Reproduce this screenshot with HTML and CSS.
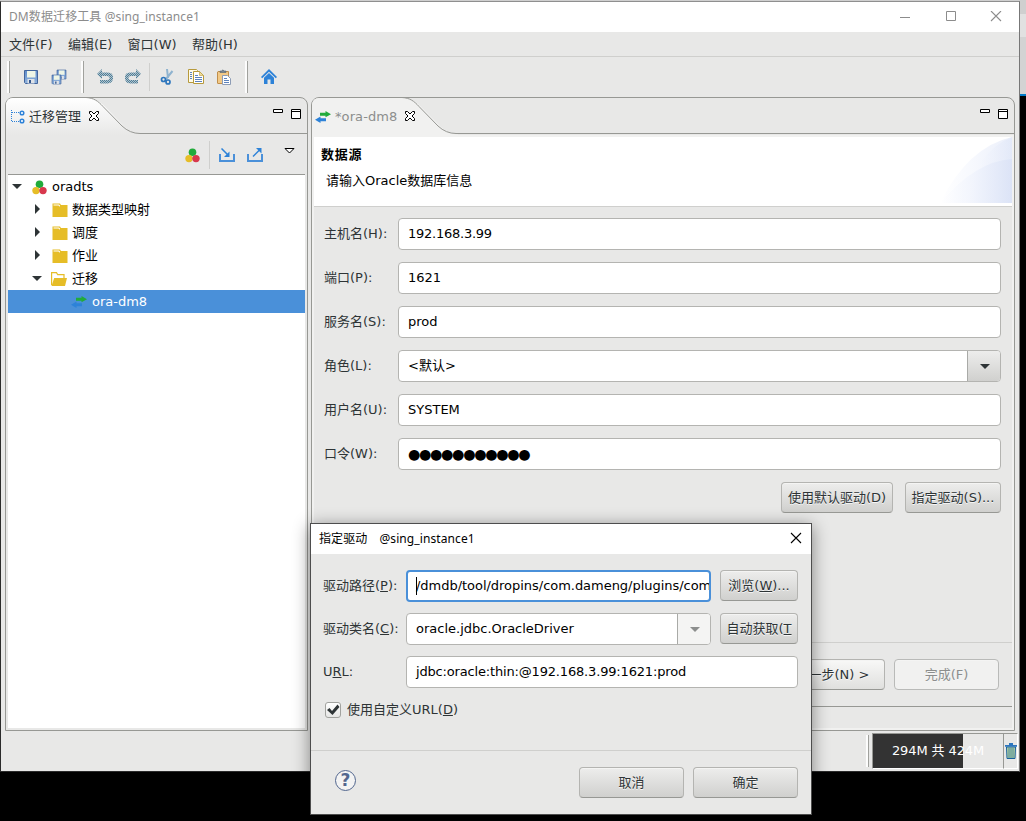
FILE: index.html
```
<!DOCTYPE html>
<html lang="zh-CN">
<head>
<meta charset="UTF-8" />
<meta name="viewport" content="width=device-width, initial-scale=1" />
<title>DM数据迁移工具 @sing_instance1</title>
<link rel="stylesheet" href="styles.css">
</head>
<body>

  <!-- shared icons -->
  <svg class="defs" width="0" height="0" aria-hidden="true">
    <defs>
      <linearGradient id="tabFill" x1="0" y1="0" x2="0" y2="1">
        <stop offset="0" stop-color="#ffffff"/>
        <stop offset="1" stop-color="#e8e8e7"/>
      </linearGradient>
      <linearGradient id="saveFill" x1="0" y1="0" x2="0" y2="1">
        <stop offset="0" stop-color="#5f8ccb"/>
        <stop offset="1" stop-color="#8fb2dc"/>
      </linearGradient>
      <linearGradient id="swoosh" x1="0" y1="0" x2="1" y2="0">
        <stop offset="0" stop-color="#ffffff"/>
        <stop offset="0.4" stop-color="#f2f5fd"/>
        <stop offset="1" stop-color="#dae2f6"/>
      </linearGradient>
      <pattern id="dither" width="2" height="2" patternUnits="userSpaceOnUse">
        <path d="M0 0h2v2H0z" fill="#b4c3ca"/>
        <path d="M0 0h1v1H0zM1 1h1v1H1z" fill="#4d7f9b"/>
      </pattern>
    </defs>
    <symbol id="i-save" viewBox="0 0 16 16">
      <path d="M1.500 1.500h13v13h-12l-1-1z" fill="url(#saveFill)" stroke="#42659c"/>
      <path d="M4 2h8.500v6.500H4z" fill="#eef5e6"/>
      <path d="M4.500 10h7v4.500h-7z" fill="#dfe3e8"/>
      <path d="M6 11h2v3H6z" fill="#36598f"/>
    </symbol>
    <symbol id="i-undo" viewBox="0 0 16 16">
      <path d="M0 5 5 0v3.500h5.500c5 0 5.500 3 5.500 5.500s-1.500 5.500-5.500 5.500H3v-3.500h7c2 0 2.500-1 2.500-2S12 7 10 7H5v3z" fill="url(#dither)"/>
    </symbol>
    <symbol id="i-dots" viewBox="0 0 15 15">
      <circle cx="7.500" cy="4.200" r="3.800" fill="#21ab3b"/>
      <circle cx="4" cy="10.600" r="3.700" fill="#e6bd27"/>
      <circle cx="11" cy="10.600" r="3.700" fill="#d8384d"/>
    </symbol>
    <symbol id="i-folder" viewBox="0 0 16 14">
      <path d="M.5 12.500V.5H8L9 2h6.500v12H.5z" fill="#e6bd27"/>
      <path d="M1.500 2.500V1.500H7L8 2.500v1H7.500l-1-1z" fill="#fff"/>
    </symbol>
    <symbol id="i-swap" viewBox="0 0 16 12">
      <path d="M5 1.800h5.500V0L16 3.300l-5.500 3V4.800H5z" fill="#21ab3b"/>
      <path d="M11 7.200H5.500V5.400L0 8.700 5.500 12v-1.800H11z" fill="#2d82d8"/>
    </symbol>
    <symbol id="i-close" viewBox="0 0 12 12">
      <path d="M1.500 1.500h2l2.500 2.500 2.500-2.500h2v2L8 6l2.500 2.500v2h-2L6 8l-2.500 2.500h-2v-2L4 6 1.500 3.500z" fill="#fff" stroke="#000"/>
    </symbol>
    <symbol id="i-min" viewBox="0 0 10 11"><path d="M.5 .5h9v3h-9z" fill="#fff" stroke="#000"/></symbol>
    <symbol id="i-max" viewBox="0 0 10 11"><path d="M.5 .5h9v9h-9zM.5 2.500h9" fill="#fff" stroke="#000"/></symbol>
    <symbol id="i-x" viewBox="0 0 12 12"><path d="M1 1l10 10M11 1L1 11" fill="none" stroke="currentColor" stroke-width="1.100"/></symbol>
  </svg>

  <div class="desktop-strip"></div>

  <div class="window">
    <div class="titlebar">
      <span class="title-text">DM数据迁移工具 @sing_instance1</span>
      <div class="win-buttons">
        <svg width="12" height="12"><path d="M1 6.500h10" stroke="#8c8c8c"/></svg>
        <svg width="12" height="12"><path d="M1.500 .5h9v9h-9z" fill="none" stroke="#8c8c8c"/></svg>
        <svg width="12" height="12"><use href="#i-x" y="-1" width="12" height="12"/></svg>
      </div>
    </div>

    <div class="menubar">
      <span>文件(F)</span><span>编辑(E)</span><span>窗口(W)</span><span>帮助(H)</span>
    </div>

    <div class="toolbar">
      <i class="grip"></i>
      <div class="tools tools-file">
        <svg width="16" height="16"><use href="#i-save"/></svg>
        <svg width="16" height="16"><use href="#i-save" x="5" y="0" width="11" height="11"/><use href="#i-save" x="0" y="5" width="11" height="11"/></svg>
      </div>
      <i class="grip"></i>
      <div class="tools tools-edit">
        <svg width="16" height="16"><use href="#i-undo"/></svg>
        <svg width="16" height="16" class="flip"><use href="#i-undo"/></svg>
      </div>
      <i class="sep"></i>
      <div class="tools tools-clip">
        <svg width="16" height="16">
          <path d="M7 0 8 9M12.500 2 6 10" stroke="#8fb3cf" stroke-width="2"/>
          <circle cx="3.500" cy="10.500" r="2" fill="none" stroke="#2d76bd" stroke-width="1.700"/>
          <circle cx="8" cy="13" r="2" fill="none" stroke="#2d76bd" stroke-width="1.700"/>
        </svg>
        <svg width="16" height="16">
          <path d="M.5 .5h8l1 1v12h-9z" fill="#fffbe8" stroke="#b79a3c"/>
          <path d="M5.500 2.500h6l4 4v8h-10z" fill="#fff" stroke="#b79a3c"/>
          <path d="M11.500 2.500v4h4z" fill="#f0dc9a" stroke="#b79a3c" stroke-width=".6"/>
          <path d="M7 6.500h3M7 8.500h7M7 10.500h7M7 12.500h7M2 3.500h2M2 5.500h2M2 7.500h2M2 9.500h2" stroke="#5d83bd"/>
        </svg>
        <svg width="16" height="16">
          <path d="M2 2.500h10.500v12H2q-.5 0-.5-.5V3z" fill="#f2c987" stroke="#c08f4c"/>
          <path d="M4 3.500V2h1.500q1-2 3 0H10v1.500z" fill="#7a8794" stroke="#55636f" stroke-width=".6"/>
          <path d="M6.500 6.500h5l3 3v6h-8z" fill="#fff" stroke="#8d9cb5"/>
          <path d="M8 9.500h3M8 11.500h5M8 13.500h5" stroke="#5d83bd"/>
        </svg>
      </div>
      <i class="grip"></i>
      <div class="tools tools-home">
        <svg width="16" height="16"><path d="M8 0 0 8l1.200 1.200L8 2.800l6.800 6.400L16 8z" fill="#2d82d8"/><path d="M8 4 3 8.800V15h3.500v-4.500h3V15H13V8.800z" fill="#2d82d8"/></svg>
      </div>
    </div>

    <div class="workbench">
      <section class="panel panel-nav">
        <div class="tabs">
          <svg class="tab-shape" width="302" height="37">
            <path d="M0 37V6Q1 0 7 0H80C88 0 93 2.500 99 8.500L118 28Q126 36.500 136 36.500V37z" fill="url(#tabFill)"/>
            <path d="M80 -.5C88 0 92 3 97 8.500L116 28Q124 35.500 134 35.500H302" fill="none" stroke="#979894"/>
          </svg>
          <svg width="14" height="14">
            <path d="M.5 0V12M1 2.500h7M1 11.500h7" fill="none" stroke="#2d82d8" stroke-dasharray="1 1"/>
            <circle cx="11" cy="3" r="1.800" fill="#fff" stroke="#2d82d8" stroke-width="1.500"/>
            <circle cx="11" cy="11" r="1.800" fill="#fff" stroke="#2d82d8" stroke-width="1.500"/>
          </svg>
          <span class="tab-name">迁移管理</span>
          <svg class="close" width="12" height="12"><use href="#i-close"/></svg>
          <div class="view-buttons">
            <svg width="10" height="11"><use href="#i-min"/></svg>
            <svg width="10" height="11"><use href="#i-max"/></svg>
          </div>
        </div>
        <div class="view-tools">
          <svg width="15" height="15"><use href="#i-dots"/></svg>
          <i class="sep"></i>
          <svg width="16" height="14"><path d="M1 6v7h14V6" fill="none" stroke="#4a90d9" stroke-width="2"/><path d="M2.500 .5 9 7" stroke="#2d82d8" stroke-width="1.500"/><path d="M10.500 3.500v5.500H5z" fill="#2d82d8"/></svg>
          <svg width="16" height="14"><path d="M1 6v7h14V6" fill="none" stroke="#4a90d9" stroke-width="2"/><path d="M6 8.500 12.500 2" stroke="#2d82d8" stroke-width="1.500"/><path d="M9 0h5.500v5.500z" fill="#2d82d8"/></svg>
          <svg class="view-menu" width="11" height="6"><path d="M1 .5h9L5.500 5z" fill="#fff" stroke="#000"/></svg>
        </div>
        <ul class="tree">
          <li class="lv0"><i class="arrow down"></i><svg width="15" height="15"><use href="#i-dots"/></svg>oradts</li>
          <li class="lv1"><i class="arrow right"></i><svg width="16" height="14"><use href="#i-folder"/></svg>数据类型映射</li>
          <li class="lv1"><i class="arrow right"></i><svg width="16" height="14"><use href="#i-folder"/></svg>调度</li>
          <li class="lv1"><i class="arrow right"></i><svg width="16" height="14"><use href="#i-folder"/></svg>作业</li>
          <li class="lv1"><i class="arrow down"></i><svg width="16" height="14"><path d="M.6 13V.7H5.500l1.200 2H13v4" fill="none" stroke="#e6bd27" stroke-width="1.200"/><path d="M3.200 6H16l-2 8H.5z" fill="#e6bd27"/></svg>迁移</li>
          <li class="lv2 selected"><svg width="16" height="12"><use href="#i-swap"/></svg>ora-dm8</li>
        </ul>
      </section>

      <section class="panel panel-editor">
        <div class="tabs">
          <svg class="tab-shape" width="703" height="37">
            <path d="M0 37V6Q1 0 7 0H90C98 0 103 2.500 109 8.500L128 28Q136 36.500 146 36.500V37z" fill="#f1f1f0"/>
            <path d="M90 -.5C98 0 102 3 107 8.500L126 28Q134 35.500 144 35.500H703" fill="none" stroke="#979894"/>
          </svg>
          <svg width="16" height="12"><use href="#i-swap"/></svg>
          <span class="tab-name dim">*ora-dm8</span>
          <svg class="close" width="12" height="12"><use href="#i-close"/></svg>
          <div class="view-buttons">
            <svg width="10" height="11"><use href="#i-min"/></svg>
            <svg width="10" height="11"><use href="#i-max"/></svg>
          </div>
        </div>

        <div class="page">
          <header class="banner">
            <div>
              <h1>数据源</h1>
              <p>请输入Oracle数据库信息</p>
            </div>
            <svg width="72" height="66">
              <path d="M0 66Q28 10 72 0V66z" fill="url(#swoosh)" opacity=".55"/>
              <path d="M24 66Q36 14 72 0V66z" fill="url(#swoosh)" opacity=".45"/>
              <path d="M0 66Q36 24 72 22V66z" fill="url(#swoosh)" opacity=".8"/>
            </svg>
          </header>

          <div class="form">
            <div class="row"><label>主机名(H):</label><div class="input tight">192.168.3.99</div></div>
            <div class="row"><label>端口(P):</label><div class="input">1621</div></div>
            <div class="row"><label>服务名(S):</label><div class="input">prod</div></div>
            <div class="row"><label>角色(L):</label><div class="input combo"><span>&lt;默认&gt;</span><b class="drop"><i class="arrow down"></i></b></div></div>
            <div class="row"><label>用户名(U):</label><div class="input">SYSTEM</div></div>
            <div class="row"><label>口令(W):</label><div class="input password">●●●●●●●●●●●</div></div>
            <div class="form-actions">
              <button class="btn btn-default">使用默认驱动(D)</button>
              <button class="btn btn-driver">指定驱动(S)...</button>
            </div>
          </div>

          <div class="wizard-actions">
            <button class="btn next">下一步(N) &gt;</button>
            <button class="btn" disabled>完成(F)</button>
          </div>
          <div class="page-foot"></div>
        </div>
      </section>
    </div>

    <div class="statusbar">
      <i class="grip"></i>
      <div class="heap"><span>294M 共 424M</span></div>
      <div class="trash">
        <svg width="12" height="16">
          <path d="M1.500 4h9l-.5 11.500H2z" fill="#b5cfa0" stroke="#17609e"/>
          <path d="M4 5v10M6 5v10M8 5v10" stroke="#2b7a9e" stroke-width=".8"/>
          <path d="M0 2.800h12M4 1h4" stroke="#2d76bd" stroke-width="1.800"/>
        </svg>
      </div>
    </div>
  </div>

  <div class="dialog" role="dialog">
    <div class="dialog-title">
      <span class="title-text">指定驱动</span>
      <span class="title-text">@sing_instance1</span>
      <svg width="12" height="12"><use href="#i-x"/></svg>
    </div>
    <div class="dialog-body">
      <div class="row">
        <label>驱动路径(<u>P</u>):</label>
        <div class="input focused"><span class="caret"></span>/dmdb/tool/dropins/com.dameng/plugins/com</div>
        <button class="btn">浏览(<u>W</u>)...</button>
      </div>
      <div class="row">
        <label>驱动类名(<u>C</u>):</label>
        <div class="input combo"><span>oracle.jdbc.OracleDriver</span><b class="drop off"><i class="arrow down"></i></b></div>
        <button class="btn auto">自动获取(<u>T</u></button>
      </div>
      <div class="row">
        <label>U<u>R</u>L:</label>
        <div class="input url">jdbc:oracle:thin:@192.168.3.99:1621:prod</div>
      </div>
      <div class="check-row">
        <span class="checkbox"><svg width="14" height="12"><path d="M1 6l2.500-2L6 7 11.500 .5 13.500 3 6.500 11z" fill="#2e3436"/></svg></span>
        <span>使用自定义URL(<u>D</u>)</span>
      </div>
    </div>
    <div class="dialog-foot">
      <div class="help">?</div>
      <button class="btn">取消</button>
      <button class="btn">确定</button>
    </div>
  </div>

</body>
</html>
```
FILE: styles.css
```
* {
  box-sizing: border-box;
}
body {
  margin: 0;
  width: 1026px;
  height: 821px;
  overflow: hidden;
  position: relative;
  background: #000;
  padding-top: 1px;
  font-family: "DejaVu Sans", "Noto Sans CJK SC", sans-serif;
  font-size: 13px;
  line-height: 20px;
  color: #2e3436;
}
svg {
  display: block;
  flex: none;
}
.defs {
  position: absolute;
}
/* bit of the desktop that shows behind the window */
.desktop-strip {
  position: absolute;
  top: 0;
  left: 0;
  width: 1026px;
  height: 96px;
  background: linear-gradient(#cfcfcf 0 14px, #e1e1e1 14px 37px, #d3d3d3 37px);
  border-bottom: 2px solid #0078c8;
}
.window {
  position: relative;
  width: 1020px;
  height: 771px;
  display: flex;
  flex-direction: column;
  background: #e8e8e7;
  border: 1px solid #2b2b2b;
  border-top-color: #8f8f8f;
  border-right-color: #777;
}
.titlebar {
  height: 30px;
  flex: none;
  background: #fff;
  display: flex;
  align-items: center;
  justify-content: space-between;
  padding: 0 17px 0 8px;
  color: #8c8c8c;
}
.title-text {
  font-family: "Noto Sans", "Noto Sans CJK SC", sans-serif;
  font-size: 12px;
  letter-spacing: 0.1px;
}
.win-buttons {
  display: flex;
  gap: 33.5px;
}
.menubar {
  height: 25px;
  flex: none;
  display: flex;
  gap: 15.300px;
  padding: 3px 8px 0;
  border-bottom: 1px solid #cfcfcd;
}
.toolbar {
  height: 40px;
  flex: none;
  display: flex;
  align-items: center;
  padding-left: 6px;
}
.grip {
  width: 3px;
  height: 32px;
  flex: none;
  border-left: 2px solid #fcfcfc;
  border-right: 1px solid #a0a19d;
}
.sep {
  width: 1px;
  height: 28px;
  background: #cfcfcd;
}
.tools {
  display: flex;
  gap: 12px;
}
.tools-file {
  margin: 0 14px 0 13px;
}
.tools-edit {
  margin: 0 8px 0 13px;
}
.tools-clip {
  margin: 0 13px 0 10px;
}
.tools-home {
  margin-left: 13px;
}
.flip {
  transform: scaleX(-1);
}

/* panels */
.workbench {
  flex: 1;
  display: flex;
  gap: 3px;
  padding: 0 4px 0 4px;
}
.panel {
  display: flex;
  flex-direction: column;
  border: 1px solid #979894;
  border-radius: 8px 8px 0 0;
}
.panel-nav {
  width: 303px;
}
.panel-editor {
  width: 704px;
}
.tabs {
  position: relative;
  height: 37px;
  flex: none;
  display: flex;
  align-items: center;
  padding-left: 5px;
}
.tabs > * {
  position: relative;
}
.tabs > .tab-shape {
  position: absolute;
  left: 0;
  top: 0;
}
.tabs .close {
  margin-bottom: 2px;
}
.tab-name {
  margin: 0 7px 0 4px;
}
.panel-editor .tabs {
  padding-left: 3px;
}
.tab-name.dim {
  color: #8c8e8d;
  letter-spacing: 0.1px;
}
.view-buttons {
  display: flex;
  gap: 8px;
  margin: 0 6px 5px auto;
}
.view-tools {
  height: 40px;
  flex: none;
  display: flex;
  align-items: center;
  margin: 0 2px;
  padding: 1px 0 0 177px;
  border-bottom: 1px solid #979894;
}
.view-tools .sep {
  margin: 0 9px;
}
.view-tools .sep + svg {
  margin-right: 12px;
}
.view-tools .view-menu {
  margin: 0 0 8px 21px;
}
.tree {
  flex: 1;
  list-style: none;
  margin: 0 2px 2px;
  padding: 0;
  background: #fff;
  color: #000;
}
.tree li {
  height: 23px;
  display: flex;
  align-items: center;
}
.tree .arrow {
  width: 10px;
}
.tree .lv0 {
  padding-left: 4px;
}
.tree .lv0 svg {
  margin: 1px 5px 0 10px;
}
.tree .lv1 {
  padding-left: 24px;
}
.tree .lv1 svg {
  margin: 1px 4px 0 10px;
}
.tree .lv1 .down + svg {
  margin: 1px 5px 0 9px;
}
.tree .lv2 {
  padding-left: 63px;
}
.tree .lv2 svg {
  margin-right: 5px;
}
.tree .selected {
  background: #4a90d9;
  color: #fff;
}
.arrow::before {
  content: "";
  display: block;
  width: 0;
  height: 0;
  border: 5px solid transparent;
}
.arrow.down::before {
  border-top-color: #2e3436;
  border-bottom: 0;
}
.arrow.right::before {
  border-left-color: #2e3436;
  border-right: 0;
  margin: 0 0 1px 3px;
}

/* editor page */
.page {
  flex: 1;
  display: flex;
  flex-direction: column;
  margin: 0;
  border: 2px solid #f1f1f0;
}
.banner {
  height: 70px;
  flex: none;
  display: flex;
  justify-content: space-between;
  background: #fff;
  color: #000;
  padding: 0 0 0 7px;
  border-bottom: 1px solid #cfcfcd;
}
.banner h1 {
  margin: 8px 0 6px;
  font-size: 13px;
  line-height: 20px;
  letter-spacing: 0.8px;
}
.banner p {
  margin: 0 0 0 5px;
}
.form {
  display: flex;
  flex-direction: column;
  gap: 12px;
  padding: 11px 11px 0 10px;
}
.row {
  display: flex;
  align-items: center;
}
.form label {
  width: 74px;
  flex: none;
}
.input {
  flex: 1;
  min-width: 0;
  height: 32px;
  display: flex;
  align-items: center;
  background: #fff;
  border: 1px solid #b4b4b1;
  border-radius: 4px;
  padding: 0 0 1px 9px;
  color: #000;
  white-space: nowrap;
  overflow: hidden;
}
.tight {
  letter-spacing: -0.25px;
}
.url {
  letter-spacing: -0.170px;
}
.password {
  font-size: 14.200px;
  letter-spacing: -1.350px;
}
.combo {
  padding: 0 0 0 9px;
  justify-content: space-between;
}
.drop {
  width: 33px;
  height: 30px;
  display: flex;
  align-items: center;
  justify-content: center;
  padding-left: 2px;
  border-left: 1px solid #a9aaa7;
  background: linear-gradient(#ededec, #d0d0ce);
}
.drop.off {
  background: #f4f4f3;
}
.drop.off .arrow::before {
  border-top-color: #8c8e8d;
}
.btn {
  height: 31px;
  padding: 0;
  font: inherit;
  color: #2e3436;
  text-shadow: 0 1px #f6f6f6;
  white-space: nowrap;
  border: 1px solid #b4b4b1;
  border-bottom-color: #979894;
  border-radius: 4px;
  background: linear-gradient(#ededec, #d0d0ce);
  box-shadow: inset 0 1px #f4f4f3;
}
.btn:disabled {
  color: #8c8e8d;
  background: #f1f1f0;
  border-color: #b9bab8;
}
.form-actions {
  display: flex;
  justify-content: flex-end;
  gap: 12px;
}
.btn-default {
  width: 112px;
}
.btn-driver {
  width: 96px;
}
.wizard-actions {
  height: 64px;
  margin-top: auto;
  display: flex;
  justify-content: flex-end;
  gap: 9px;
  padding: 16px 13px 0 0;
  border-top: 1px solid #cfcfcd;
}
.wizard-actions .btn {
  width: 105px;
}
.wizard-actions .next {
  background: linear-gradient(#f8f8f7, #e0e0de);
}
.page-foot {
  height: 22px;
  flex: none;
  border-top: 1px solid #979894;
}

/* status line */
.statusbar {
  height: 40px;
  flex: none;
  display: flex;
  align-items: center;
  justify-content: flex-end;
  padding-right: 1px;
}
.heap {
  width: 132px;
  height: 36px;
  margin-left: 3px;
  border: 1px solid #979894;
  border-bottom-color: #fff;
  background: linear-gradient(90deg, #333 90px, transparent 90px);
  color: #fff;
  text-align: center;
  line-height: 34px;
  letter-spacing: -0.1px;
}
.trash {
  width: 14px;
  height: 36px;
  border-top: 1px solid #979894;
  border-right: 1px solid #fff;
  border-bottom: 1px solid #fff;
  display: flex;
  align-items: center;
  justify-content: center;
}

/* driver dialog */
.dialog {
  position: absolute;
  left: 310px;
  top: 523px;
  width: 502px;
  height: 292px;
  display: flex;
  flex-direction: column;
  background: #e8e8e7;
  border: 1px solid #4d4d4d;
  box-shadow: 0 3px 16px rgba(0,0,0,0.45);
}
.dialog-title {
  height: 30px;
  flex: none;
  display: flex;
  align-items: center;
  gap: 12px;
  padding: 0 9px 0 8px;
  background: #fff;
  color: #000;
}
.dialog-title svg {
  margin: 0 0 2px auto;
}
.dialog-body {
  flex: 1;
  display: flex;
  flex-direction: column;
  gap: 11px;
  padding: 16px 13px 0 12px;
}
.dialog-body label {
  width: 83px;
  flex: none;
}
.dialog-body .btn {
  width: 78px;
  margin: 0 0 1px 9px;
}
.dialog-body .focused {
  border: 2px solid #4a90d9;
  padding-left: 8px;
  letter-spacing: -0.03px;
}
.caret {
  width: 1px;
  height: 18px;
  flex: none;
  margin-right: -1px;
  background: #000;
}
.check-row {
  display: flex;
  align-items: center;
  gap: 6px;
  padding: 1px 0 0 2px;
}
.checkbox {
  width: 16px;
  height: 16px;
  display: flex;
  align-items: center;
  justify-content: center;
  border: 1px solid #a1a29f;
  border-radius: 3px;
  background: linear-gradient(#fff, #e6e6e5);
}
.dialog-foot {
  height: 64px;
  flex: none;
  display: flex;
  gap: 9px;
  padding: 16px 13px 0 24px;
  border-top: 1px solid #cfcfcd;
}
.dialog-foot .btn {
  width: 105px;
}
.help {
  width: 21px;
  height: 21px;
  margin: 3px auto 0 0;
  border: 1px solid #52668e;
  border-radius: 50%;
  color: #52668e;
  background: #f3f3f3;
  font-size: 17px;
  font-weight: bold;
  line-height: 19px;
  text-align: center;
}
```
